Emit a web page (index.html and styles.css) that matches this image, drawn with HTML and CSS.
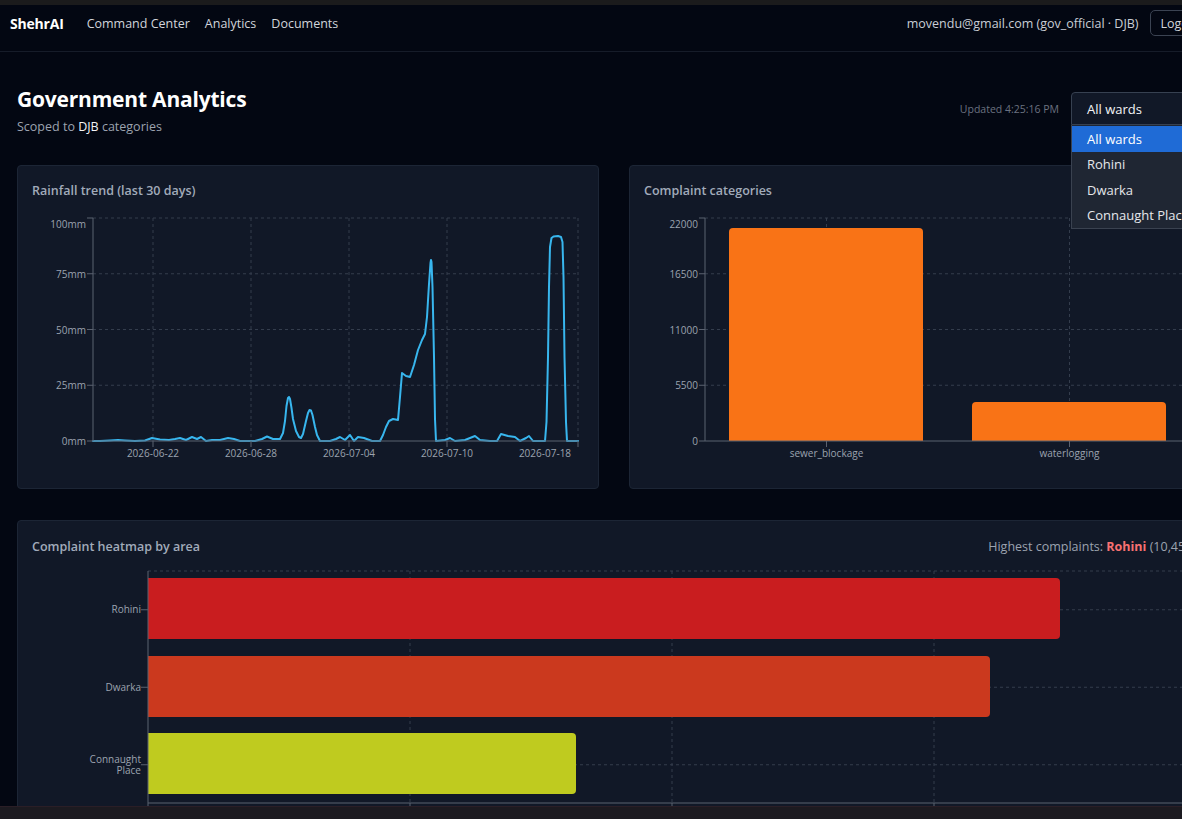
FILE: index.html
```html
<!DOCTYPE html>
<html lang="en">
<head>
<meta charset="utf-8">
<title>ShehrAI · Government Analytics</title>
<link rel="stylesheet" href="styles.css">
</head>
<body>
<div class="screen">
  <div class="chrome-top"></div>
  <div class="viewport">
    <div class="page">
      <nav class="topnav">
        <div class="nav-left">
          <span class="brand">ShehrAI</span>
          <a class="nav-link" href="#">Command Center</a>
          <a class="nav-link" href="#">Analytics</a>
          <a class="nav-link" href="#">Documents</a>
        </div>
        <div class="nav-right">
          <span class="user">movendu@gmail.com (gov_official · DJB)</span>
          <button class="logout" type="button">Logout</button>
        </div>
      </nav>

      <main class="content">
        <header class="page-head">
          <div class="head-text">
            <h1>Government Analytics</h1>
            <p class="scope">Scoped to <span class="scope-key">DJB</span> categories</p>
          </div>
          <div class="head-tools">
            <span class="updated">Updated 4:25:16 PM</span>
            <div class="ward-select">
              <div class="select-box">All wards</div>
              <ul class="select-menu">
                <li class="option selected">All wards</li>
                <li class="option">Rohini</li>
                <li class="option">Dwarka</li>
                <li class="option">Connaught Place</li>
              </ul>
            </div>
          </div>
        </header>

        <section class="grid-two">
          <article class="card">
            <h2 class="card-title">Rainfall trend (last 30 days)</h2>
            <svg class="chart" width="552" height="260" viewBox="0 0 552 260">
              <g class="grid">
                <line x1="61" y1="11" x2="546" y2="11"/>
                <line x1="61" y1="66.75" x2="546" y2="66.75"/>
                <line x1="61" y1="122.5" x2="546" y2="122.5"/>
                <line x1="61" y1="178.25" x2="546" y2="178.25"/>
                <line x1="121" y1="11" x2="121" y2="234"/>
                <line x1="219" y1="11" x2="219" y2="234"/>
                <line x1="317" y1="11" x2="317" y2="234"/>
                <line x1="415" y1="11" x2="415" y2="234"/>
                <line x1="546" y1="11" x2="546" y2="234"/>
              </g>
              <path class="rain-line" d="M61,234 L68,234 L78,233.5 L86,233 L93,233.5 L103,234 L113,233.5 L120,231 L128,232.5 L137,233 L143,232 L148,231 L154,233 L160,230 L165,232 L169,230 L174,234 L180,233 L188,233 L196,231 L202,232 L208,234 L223,234 L230,232 L235,229.5 L241,232 L248,232 L251,226 L253,214 L254.5,199 L256,191 L257,190 L258,192 L259.5,201 L261,212 L264,224 L267,230 L269,231 L271,227 L274,214 L276,206 L277.5,203 L279,203.5 L280.5,208 L283,220 L285,228 L288,234 L298,234 L304,232 L308,230 L313,233 L318,228 L322,234 L326,230 L332,231 L340,234 L348,234 L351,228 L354,220 L357,214 L361,212 L366,213 L368,190 L370,166 L374,169 L378,170 L382,158 L386,143 L390,133 L393,127 L395,110 L397,77 L398.5,56 L399,53 L399.5,55 L400.5,80 L402,150 L403,212 L404,234 L413,233 L418,231 L423,234 L433,233 L438,231 L443,229 L448,233 L458,234 L465,234 L469,227 L476,229 L483,230 L488,234 L494,231 L497,229 L501,234 L513,234 L514.5,215 L516,150 L517,80 L518,40 L519.5,31 L521.5,29.5 L526,29 L529,30 L530.5,35 L531.5,70 L532.5,150 L534,215 L535,234 L546,234"/>
              <g class="axis">
                <line x1="61" y1="11" x2="61" y2="234"/>
                <line x1="61" y1="234" x2="546" y2="234"/>
                <line x1="55" y1="11" x2="61" y2="11"/>
                <line x1="55" y1="66.75" x2="61" y2="66.75"/>
                <line x1="55" y1="122.5" x2="61" y2="122.5"/>
                <line x1="55" y1="178.25" x2="61" y2="178.25"/>
                <line x1="55" y1="234" x2="61" y2="234"/>
                <line x1="121" y1="234" x2="121" y2="240"/>
                <line x1="219" y1="234" x2="219" y2="240"/>
                <line x1="317" y1="234" x2="317" y2="240"/>
                <line x1="415" y1="234" x2="415" y2="240"/>
                <line x1="546" y1="234" x2="546" y2="240"/>
              </g>
              <g class="tick-label y-label">
                <text x="54" y="21">100mm</text>
                <text x="54" y="70.5">75mm</text>
                <text x="54" y="126.5">50mm</text>
                <text x="54" y="182">25mm</text>
                <text x="54" y="237.5">0mm</text>
              </g>
              <g class="tick-label x-label">
                <text x="121" y="250">2026-06-22</text>
                <text x="219" y="250">2026-06-28</text>
                <text x="317" y="250">2026-07-04</text>
                <text x="415" y="250">2026-07-10</text>
                <text x="513" y="250">2026-07-18</text>
              </g>
            </svg>
          </article>

          <article class="card">
            <h2 class="card-title">Complaint categories</h2>
            <svg class="chart" width="552" height="260" viewBox="0 0 552 260">
              <g class="grid">
                <line x1="61" y1="11" x2="547" y2="11"/>
                <line x1="61" y1="66.75" x2="547" y2="66.75"/>
                <line x1="61" y1="122.5" x2="547" y2="122.5"/>
                <line x1="61" y1="178.25" x2="547" y2="178.25"/>
                <line x1="182.5" y1="11" x2="182.5" y2="234"/>
                <line x1="425.5" y1="11" x2="425.5" y2="234"/>
              </g>
              <g class="bars-orange">
                <path d="M85,234 V25 Q85,21 89,21 H275 Q279,21 279,25 V234 Z"/>
                <path d="M328,234 V199 Q328,195 332,195 H518 Q522,195 522,199 V234 Z"/>
              </g>
              <g class="axis">
                <line x1="61" y1="11" x2="61" y2="234"/>
                <line x1="61" y1="234" x2="547" y2="234"/>
                <line x1="55" y1="11" x2="61" y2="11"/>
                <line x1="55" y1="66.75" x2="61" y2="66.75"/>
                <line x1="55" y1="122.5" x2="61" y2="122.5"/>
                <line x1="55" y1="178.25" x2="61" y2="178.25"/>
                <line x1="55" y1="234" x2="61" y2="234"/>
                <line x1="182.5" y1="234" x2="182.5" y2="240"/>
                <line x1="425.5" y1="234" x2="425.5" y2="240"/>
              </g>
              <g class="tick-label y-label">
                <text x="54" y="21">22000</text>
                <text x="54" y="70.5">16500</text>
                <text x="54" y="126.5">11000</text>
                <text x="54" y="182">5500</text>
                <text x="54" y="237.5">0</text>
              </g>
              <g class="tick-label x-label">
                <text x="182.5" y="250">sewer_blockage</text>
                <text x="425.5" y="250">waterlogging</text>
              </g>
            </svg>
          </article>
        </section>

        <article class="card card-wide">
          <div class="card-head">
            <h2 class="card-title">Complaint heatmap by area</h2>
            <p class="highest">Highest complaints: <strong class="hot">Rohini</strong> (10,452)</p>
          </div>
          <svg class="chart" width="1164" height="262" viewBox="0 0 1164 262">
            <g class="grid">
              <line x1="116" y1="8" x2="1164" y2="8"/>
              <line x1="116" y1="46.75" x2="1164" y2="46.75"/>
              <line x1="116" y1="124.25" x2="1164" y2="124.25"/>
              <line x1="116" y1="201.75" x2="1164" y2="201.75"/>
              <line x1="378" y1="8" x2="378" y2="240"/>
              <line x1="640" y1="8" x2="640" y2="240"/>
              <line x1="902" y1="8" x2="902" y2="240"/>
              <line x1="1164" y1="8" x2="1164" y2="240"/>
            </g>
            <path class="bar-rohini" d="M116,15 H1024 Q1028,15 1028,19 V72 Q1028,76 1024,76 H116 Z"/>
            <path class="bar-dwarka" d="M116,93 H954 Q958,93 958,97 V150 Q958,154 954,154 H116 Z"/>
            <path class="bar-cp" d="M116,170 H540 Q544,170 544,174 V227 Q544,231 540,231 H116 Z"/>
            <g class="axis">
              <line x1="116" y1="8" x2="116" y2="240"/>
              <line x1="116" y1="240" x2="1164" y2="240"/>
              <line x1="109" y1="46.75" x2="116" y2="46.75"/>
              <line x1="109" y1="124.25" x2="116" y2="124.25"/>
              <line x1="109" y1="201.75" x2="116" y2="201.75"/>
              <line x1="116" y1="240" x2="116" y2="246"/>
              <line x1="378" y1="240" x2="378" y2="246"/>
              <line x1="640" y1="240" x2="640" y2="246"/>
              <line x1="902" y1="240" x2="902" y2="246"/>
            </g>
            <g class="tick-label y-label">
              <text x="109" y="50.25">Rohini</text>
              <text x="109" y="127.75">Dwarka</text>
              <text x="109" y="199.5">Connaught</text>
              <text x="109" y="210.5">Place</text>
            </g>
            <g class="tick-label x-label">
              <text x="116" y="257">0</text>
              <text x="378" y="257">3000</text>
              <text x="640" y="257">6000</text>
              <text x="902" y="257">9000</text>
            </g>
          </svg>
        </article>
      </main>
    </div>
  </div>
  <div class="chrome-bottom"></div>
</div>
</body>
</html>
```
FILE: styles.css
```css
* {
  box-sizing: border-box;
}

html,
body {
  margin: 0;
  padding: 0;
  background: #030712;
}

body {
  font-family: "Open Sans", "Noto Sans", "Liberation Sans", sans-serif;
  color: #e5e7eb;
}

.screen {
  display: flex;
  flex-direction: column;
  width: 1182px;
  height: 819px;
  overflow: hidden;
}

.chrome-top {
  flex: none;
  height: 5px;
  background: #1b1b1c;
}

.viewport {
  flex: 1;
  min-height: 0;
  overflow: hidden;
  background: #030712;
}

.chrome-bottom {
  flex: none;
  height: 13px;
  background: #1c1a20;
  border-top: 1px solid #2a1e26;
}

.page {
  width: 1228px;
}

/* top navigation */
.topnav {
  display: flex;
  align-items: center;
  justify-content: space-between;
  padding: 5px 16px 15px 10px;
  border-bottom: 1px solid #161c29;
}

.nav-left {
  display: flex;
  align-items: center;
  gap: 15px;
}

.brand {
  font-size: 14px;
  font-weight: 700;
  color: #ffffff;
  margin-right: 8px;
  letter-spacing: -0.2px;
}

.nav-link {
  font-size: 12.5px;
  color: #d1d5db;
  text-decoration: none;
}

.nav-right {
  display: flex;
  align-items: center;
  gap: 11px;
}

.user {
  font-size: 12.5px;
  color: #c9ced6;
}

.logout {
  height: 26px;
  padding: 0 10px;
  font: inherit;
  font-size: 12.5px;
  color: #d1d5db;
  background: transparent;
  border: 1px solid #3b4352;
  border-radius: 5px;
}

/* page header */
.content {
  padding: 33px 17px 0;
}

.page-head {
  display: flex;
  align-items: flex-start;
  justify-content: space-between;
}

h1 {
  margin: 0;
  font-size: 21px;
  line-height: 28px;
  font-weight: 700;
  color: #ffffff;
  letter-spacing: -0.2px;
}

.scope {
  margin: 5px 0 0;
  font-size: 12.5px;
  line-height: 18px;
  color: #9ca3af;
}

.scope-key {
  color: #f3f4f6;
}

.head-tools {
  display: flex;
  align-items: center;
  gap: 12px;
  margin-top: 7px;
}

.updated {
  font-size: 10.5px;
  color: #6b7280;
}

.ward-select {
  position: relative;
  width: 140px;
}

.select-box {
  height: 33px;
  padding: 0 15px;
  display: flex;
  align-items: center;
  font-size: 13px;
  color: #f3f4f6;
  background: #111827;
  border: 1px solid #374151;
  border-radius: 4px 4px 0 0;
}

.select-menu {
  position: absolute;
  top: 33px;
  left: 0;
  width: 140px;
  margin: 0;
  padding: 1px 0 0;
  list-style: none;
  background: #1f2633;
  border: 1px solid #3a4250;
  border-top: none;
  z-index: 5;
}

.option {
  height: 25.5px;
  padding: 0 15px;
  display: flex;
  align-items: center;
  font-size: 13px;
  color: #e5e7eb;
  white-space: nowrap;
}

.option.selected {
  background: #1f6bd6;
  color: #ffffff;
}

/* cards */
.grid-two {
  display: grid;
  grid-template-columns: 582px 582px;
  gap: 30px;
  margin-top: 29px;
}

.card {
  background: #111827;
  border: 1px solid #1c2535;
  border-radius: 4px;
  padding: 16px 14px 21px;
}

.card-title {
  margin: 0;
  font-size: 12.5px;
  line-height: 18px;
  font-weight: 600;
  color: #a1abba;
}

.chart {
  display: block;
  margin-top: 7px;
  overflow: visible;
}

.card-wide {
  margin-top: 31px;
  width: 1194px;
  padding-top: 17px;
  padding-bottom: 40px;
}

.card-wide .chart {
  margin-top: 7px;
}

.card-head {
  display: flex;
  align-items: center;
  justify-content: space-between;
}

.highest {
  margin: 0;
  font-size: 12.5px;
  line-height: 18px;
  color: #9ca3af;
}

.hot {
  color: #f87171;
  font-weight: 700;
}

/* chart parts */
.grid line {
  stroke: #343d4d;
  stroke-width: 1;
  stroke-dasharray: 3 3;
}

.axis line {
  stroke: #5b6270;
  stroke-width: 1;
}

.tick-label text {
  font-family: "Open Sans", "Noto Sans", "Liberation Sans", sans-serif;
  font-size: 10px;
  fill: #9ca3af;
}

.y-label text {
  text-anchor: end;
}

.x-label text {
  text-anchor: middle;
}

.rain-line {
  fill: none;
  stroke: #38b6ee;
  stroke-width: 2;
  stroke-linejoin: round;
  stroke-linecap: round;
}

.bars-orange path {
  fill: #f97316;
}

.bar-rohini {
  fill: #c91d1f;
}

.bar-dwarka {
  fill: #cb391e;
}

.bar-cp {
  fill: #bfcb1f;
}
```
